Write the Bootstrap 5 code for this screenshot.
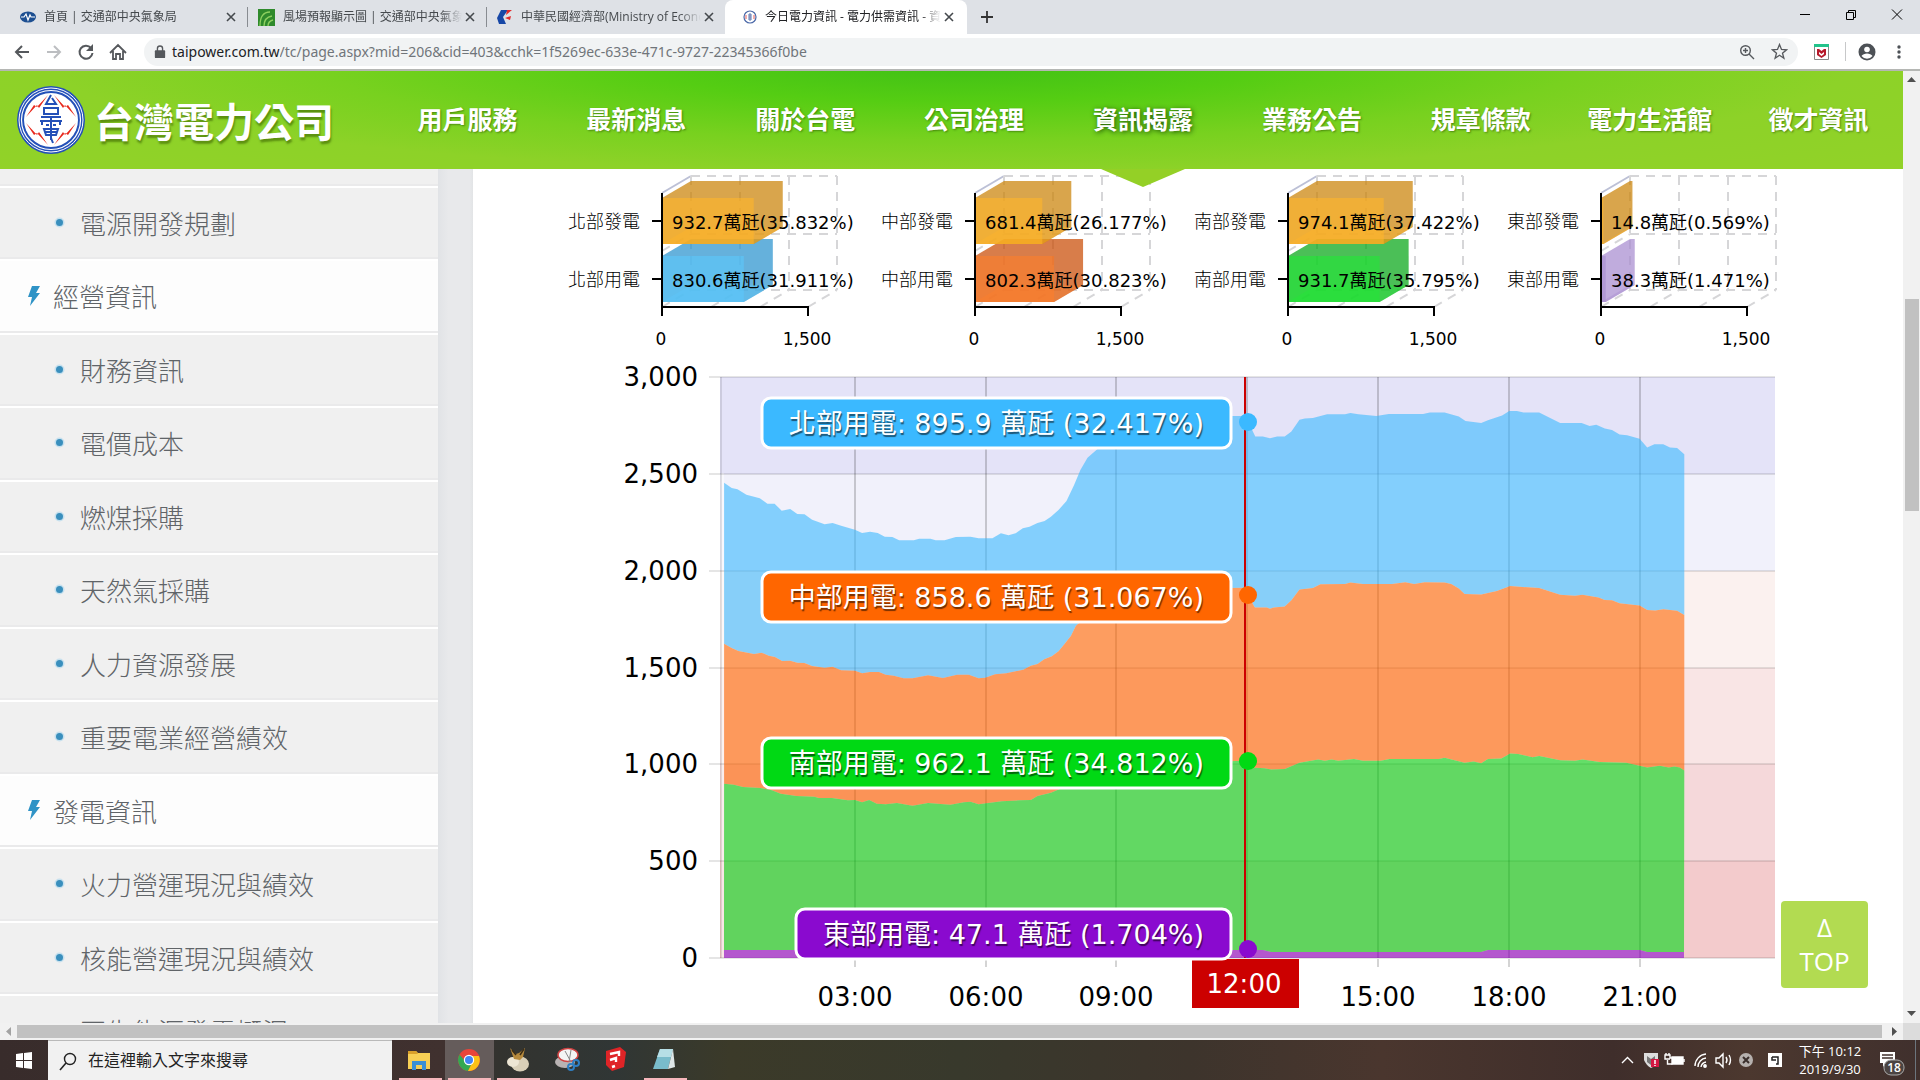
<!DOCTYPE html>
<html lang="zh-Hant">
<head>
<meta charset="utf-8">
<meta name="viewport" content="width=device-width, initial-scale=1">
<title>今日電力資訊 - 電力供需資訊 - 資訊揭露</title>
<link href="https://cdn.jsdelivr.net/npm/bootstrap@5.3.0/dist/css/bootstrap.min.css" rel="stylesheet">
<style>
  body { font-family: "Open Sans", "Noto Sans CJK TC", sans-serif; background: #fff; }
  button { border: 0; background: none; padding: 0; }
  svg { display: block; flex: none; }

  .tab-strip { height: 34px; background: #dee1e6; font-size: 12px; color: #3c4043; }
  .tab-item { width: 238px; height: 34px; padding: 0 8px 0 10px; }
  .tab-item a { color: #45494d; text-decoration: none; flex: 1 1 0; overflow: hidden; white-space: nowrap; line-height: 20px;
    -webkit-mask-image: linear-gradient(90deg, #000 88%, transparent); mask-image: linear-gradient(90deg, #000 88%, transparent); }
  .tab-item svg { margin-right: 8px; }
  .tab-item button svg { margin: 0; }
  .tab-item button { width: 16px; height: 16px; }
  .tab-line { border-right: 1px solid #888c91; height: 20px; }
  .tab-first { width: 247px; padding-left: 20px; }
  .tab-open { width: 242px; background: #fff; border-radius: 8px 8px 0 0; padding: 0 10px 0 18px; }
  .tab-open a { color: #202124; }
  .win-btn { width: 46px; height: 28px; }

  .tool-row { height: 37px; border-bottom: 2px solid #b5b7b4; padding: 0 14px 0 12px; }
  .tool-btn { width: 20px; height: 20px; }
  .tool-set { column-gap: 12px; }
  .omni { height: 28px; border-radius: 14px; background: #f1f3f4; padding: 0 10px; font-family: "Noto Sans", sans-serif; font-size: 14px; line-height: 20px; }
  .omni input { border: 0; outline: 0; background: transparent; color: #70757a; }
  .omni label { color: #202124; padding-left: 6px; }

  .site-head { height: 98px; z-index: 5;
    background: radial-gradient(ellipse 900px 110px at 50% -8px, #3fc016 0, #55cd13 35%, #78d11f 70%, #8dd228 100%, #95d228 170%); }
  .brand-link { width: 383px; }
  .brand-name { font-family: "Noto Sans CJK TC", sans-serif; font-size: 40px; line-height: 56px; font-weight: 700; color: #fff; text-shadow: 1px 3px 2px rgba(60,100,0,.6); }
  .site-nav a { font-family: "Noto Sans CJK TC", sans-serif; flex: 1 1 0; text-align: center; font-size: 25px; line-height: 36px; font-weight: 700; color: #fff; text-decoration: none; white-space: nowrap; text-shadow: 1px 1px 2px rgba(40,90,0,.6); padding: 29px 0 33px; position: relative; }
  .site-nav a.here { text-shadow: 1px 1px 5px rgba(20,70,0,.9); }
  .site-nav a.here::after { content: ""; position: absolute; left: 50%; top: 100%; margin-left: -42px; border: 42px solid transparent; border-top: 18px solid #94d026; border-bottom: 0; }

  .side-menu { width: 438px; background: #f0f0f0; font-family: "Noto Sans CJK TC", sans-serif; }
  .side-menu a { display: flex; align-items: center; flex: none; height: 74px; border-bottom: 2px solid #fff; box-shadow: inset 0 -2px 0 #eaeaeb; padding: 0 0 3px 53px; font-size: 26px; font-weight: 300; color: #606468; text-decoration: none; }
  .side-menu a:nth-child(even) { height: 73px; }
  .side-menu a:first-child { height: 19px; }
  .side-menu a svg { margin-right: 14px; }
  .side-menu a.group { background: #fdfdfd; padding-left: 27px; }
  .side-menu a.group svg { margin-right: 12px; }
  .side-gap { width: 35px; background: linear-gradient(90deg, #e1e3e6, #e8e9eb 30%, #e8e9eb 90%, #e2e4e6); }

  .charts { padding: 0 93px 0 85px; }
  .charts svg { width: 100%; height: auto; }
  .charts text { font-family: "DejaVu Sans", "Noto Sans CJK TC", sans-serif; }
  .charts .t-name { font-size: 18px; font-weight: 300; }
  .charts .t-name text { font-family: "Noto Sans CJK TC", sans-serif; }
  .t-val { font-size: 18px; }
  .t-axis { font-size: 26px; }
  .t-tip { font-size: 27px; fill: #fff; text-shadow: 1px 2px 1px rgba(0,0,0,.55); }
  .t-scale { font-size: 17px; }

  .to-top { position: fixed; right: 52px; bottom: 92px; width: 87px; height: 87px; padding-bottom: 2px; border-radius: 4px; background: #b2db51; color: #fff; font-size: 26px; line-height: 34px; }

  .v-bar { width: 17px; background: #f1f1f1; }
  .v-bar .thumb { background: #c1c1c1; height: 212px; margin: 211px 1px 0 2px; }
  .h-bar { height: 17px; background: #f1f1f1; }
  .h-bar .thumb { background: #c1c1c1; height: 13px; }
  .h-bar .corner { width: 17px; height: 17px; background: #dcdcdc; }

  .task { height: 40px; color: #fff; background: linear-gradient(90deg, #382c2b 0, #40312f 23%, #33332f 26%, #303635 32%, #3b3a29 38%, #38392c 50%, #3d342c 62%, #4a362e 72%, #3f2e2b 84%, #4c382f 91%, #40302d 100%); }
  .start-btn { width: 48px; height: 40px; }
  .find { width: 344px; background: #f1f1f1; border-top: 1px solid #b9b9b9; color: #222; }
  .find input { border: 0; outline: 0; background: transparent; font-size: 16px; width: 240px; padding: 0 0 2px; }
  .find input::placeholder { color: #222; opacity: 1; }
  .app { width: 49px; height: 40px; border-bottom: 2px solid transparent; }
  .app.on { border-image: linear-gradient(90deg, transparent 4px, #f6b6bb 4px, #f6b6bb 45px, transparent 45px) 1; border-bottom: 2px solid; border-top: 0; border-left: 0; border-right: 0; }
  .app.front { background: #655c5b; }
  .clock { font-size: 13px; line-height: 18px; width: 66px; text-align: center; white-space: nowrap; margin: 0 16px 0 12px; }
</style>
<script src="https://cdn.jsdelivr.net/npm/bootstrap@5.3.0/dist/js/bootstrap.bundle.min.js"></script>
</head>
<body class="vh-100 d-flex flex-column overflow-hidden">

<!-- browser tabs -->
<div class="tab-strip d-flex align-items-center flex-shrink-0">
  <div class="tab-item tab-first d-flex align-items-center">
    <svg width="16" height="16" viewBox="0 0 16 16"><ellipse cx="8" cy="8" rx="8" ry="5.500" fill="#1d4f91"/><path d="M1 8h3l2-3 2 6 2-5 1 2h4" fill="none" stroke="#fff" stroke-width="1.200"/></svg>
    <a href="#">首頁 | 交通部中央氣象局</a>
    <button aria-label="關閉分頁"><svg width="16" height="16" viewBox="0 0 16 16"><path d="M4 4l8 8M12 4l-8 8" stroke="#45494d" stroke-width="1.600"/></svg></button>
  </div><div class="tab-line"></div>
  <div class="tab-item d-flex align-items-center">
    <svg width="17" height="17" viewBox="0 0 17 17"><path fill="#2f8a2c" d="M0 0h17v17H0z"/><path d="M2 17C2 8 5 3 12 3M6 17c0-6 2-9 8-10M10 17c0-3 1-5 5-6" stroke="#8ed060" stroke-width="1.300" fill="none"/></svg>
    <a href="#">風場預報顯示圖 | 交通部中央氣象局</a>
    <button aria-label="關閉分頁"><svg width="16" height="16" viewBox="0 0 16 16"><path d="M4 4l8 8M12 4l-8 8" stroke="#45494d" stroke-width="1.600"/></svg></button>
  </div><div class="tab-line"></div>
  <div class="tab-item d-flex align-items-center">
    <svg width="16" height="16" viewBox="0 0 16 16"><path fill="#1747a6" d="M4 1h7L6 8l3 7H2L0 9z"/><path fill="#e22a2a" d="M10 1l5 0-6 5zM8 9l6-2-1 4z"/></svg>
    <a href="#">中華民國經濟部(Ministry of Economic Affairs)</a>
    <button aria-label="關閉分頁"><svg width="16" height="16" viewBox="0 0 16 16"><path d="M4 4l8 8M12 4l-8 8" stroke="#45494d" stroke-width="1.600"/></svg></button>
  </div>
  <div class="tab-item tab-open d-flex align-items-center">
    <svg width="14" height="14" viewBox="0 0 14 14"><circle cx="7" cy="7" r="6" fill="#fff" stroke="#4a68a8" stroke-width="1.200"/><path d="M7 3v8M5 5h4M5 7h4M5 9h4" stroke="#4a68a8" stroke-width=".9"/><path d="M3 5v4M11 5v4" stroke="#e45b5b"/></svg>
    <a href="#">今日電力資訊 - 電力供需資訊 - 資訊揭露</a>
    <button aria-label="關閉分頁"><svg width="16" height="16" viewBox="0 0 16 16"><path d="M4 4l8 8M12 4l-8 8" stroke="#45494d" stroke-width="1.600"/></svg></button>
  </div>
  <button class="ms-2" aria-label="新分頁"><svg width="24" height="18" viewBox="0 0 24 18"><path d="M12 3v12M6 9h12" stroke="#333" stroke-width="1.800"/></svg></button>
  <div class="ms-auto d-flex align-self-start">
    <button class="win-btn" aria-label="最小化"><svg width="46" height="28"><path d="M18 14.500h10" stroke="#000"/></svg></button>
    <button class="win-btn" aria-label="還原"><svg width="46" height="28"><path d="M18.500 12.500h7v7h-7zM20.500 12.500v-2h7v7h-2" fill="none" stroke="#000"/></svg></button>
    <button class="win-btn" aria-label="關閉"><svg width="46" height="28"><path d="M18 9.500l10 10M28 9.500l-10 10" stroke="#000"/></svg></button>
  </div>
</div>

<!-- address bar -->
<div class="tool-row d-flex align-items-center flex-shrink-0">
  <div class="tool-set d-flex me-3">
    <button class="tool-btn" aria-label="上一頁"><svg width="20" height="20" viewBox="0 0 20 20"><path d="M17 10H4M10 4l-6 6 6 6" fill="none" stroke="#55585c" stroke-width="2"/></svg></button>
    <button class="tool-btn" aria-label="下一頁"><svg width="20" height="20" viewBox="0 0 20 20"><path d="M3 10h13M10 4l6 6-6 6" fill="none" stroke="#bcbec1" stroke-width="2"/></svg></button>
    <button class="tool-btn" aria-label="重新載入"><svg width="20" height="20" viewBox="0 0 20 20"><path d="M15 6a6.500 6.500 0 1 0 1.500 5" fill="none" stroke="#55585c" stroke-width="2"/><path d="M17 2v7h-7z" fill="#55585c"/></svg></button>
    <button class="tool-btn" aria-label="首頁"><svg width="20" height="20" viewBox="0 0 20 20"><path d="M2 11l8-8 8 8M5 9v8h3v-5h4v5h3V9" fill="none" stroke="#55585c" stroke-width="1.800"/></svg></button>
  </div>
  <div class="omni d-flex align-items-center flex-grow-1">
    <svg width="12" height="14" viewBox="0 0 14 16"><rect x="1" y="6" width="12" height="9" rx="1" fill="#55585c"/><path d="M4 7V4a3 3 0 0 1 6 0v3" fill="none" stroke="#55585c" stroke-width="1.600"/></svg>
    <label for="url">taipower.com.tw</label><input id="url" class="flex-grow-1 p-0" value="/tc/page.aspx?mid=206&amp;cid=403&amp;cchk=1f5269ec-633e-471c-9727-22345366f0be">
    <button class="me-3" aria-label="縮放"><svg width="16" height="16" viewBox="0 0 16 16"><circle cx="6.500" cy="6.500" r="4.800" fill="none" stroke="#55585c" stroke-width="1.400"/><path d="M10 10l5 5M6.500 4v5M4 6.500h5" stroke="#55585c" stroke-width="1.400"/></svg></button>
    <button aria-label="加入書籤"><svg width="17" height="17" viewBox="0 0 17 17"><path d="M8.500 1.500l2 5 5 .3-4 3.400 1.400 5-4.400-2.900-4.400 2.900 1.400-5-4-3.400 5-.3z" fill="none" stroke="#55585c" stroke-width="1.300"/></svg></button>
  </div>
  <svg class="ms-3" width="15" height="16" viewBox="0 0 15 16"><path fill="#fff" stroke="#888" d="M.5.5h14v15H.5z"/><path fill="#23c38b" d="M0 0h15v3H0z"/><path fill="#b61a2c" d="M3 5h2l2.500 2L10 5h2v6l-4.500 3L3 11z"/><path fill="#fff" d="M5 8l2.500 2L10 8v2l-2.500 2L5 10z"/></svg>
  <div class="vr ms-3 me-2 my-2"></div>
  <button class="ms-1" aria-label="帳戶"><svg width="18" height="18" viewBox="0 0 18 18"><circle cx="9" cy="9" r="8.500" fill="#4d5156"/><circle cx="9" cy="6.500" r="2.800" fill="#fff"/><path d="M3.500 13c2-3.500 9-3.500 11 0a7 7 0 0 1-11 0z" fill="#fff"/></svg></button>
  <button class="ms-3" aria-label="選單"><svg width="14" height="18" viewBox="0 0 14 18"><g fill="#4d5156"><circle cx="7" cy="4" r="1.700"/><circle cx="7" cy="9" r="1.700"/><circle cx="7" cy="14" r="1.700"/></g></svg></button>
</div>

<!-- page -->
<div class="d-flex flex-grow-1 overflow-hidden">
  <div class="d-flex flex-column flex-grow-1 overflow-hidden">
    <header class="site-head d-flex align-items-center flex-shrink-0 position-relative">
      <a href="#" class="brand-link d-flex align-items-center text-decoration-none flex-shrink-0">
        <svg class="ms-3 me-2" width="70" height="70" viewBox="-35 -35 70 70">
          <circle r="34" fill="#2450b8"/><circle r="32" fill="none" stroke="#fff" stroke-width="1"/><circle r="29.500" fill="none" stroke="#fff" stroke-width="1.200"/><circle r="27" fill="#fff"/>
          <g fill="#e8281c"><path d="M-3-25l-9 13-2-3-11 12 8-12 3 2z"/><path d="M3-25l9 13 2-3 11 12-8-12-3 2z"/><path d="M-3 25l-9-13-2 3-11-12 8 12 3-2z"/><path d="M3 25l9-13 2 3 11-12-8 12-3-2z"/></g>
          <g fill="none" stroke="#2450b8" stroke-width="2"><path d="M0-25l-5 9H5L1-22M-7-12H7v6H-7zM-10-3h20M-11 1h22M0-3v23M-9 1v4M9 1v4M-5 5h3M2 5h3M-7 9H7l-2 6H-5zM-6 12H6M0 18l2 5"/></g>
        </svg>
        <span class="brand-name">台灣電力公司</span>
      </a>
      <nav class="site-nav d-flex flex-grow-1">
        <a href="#">用戶服務</a><a href="#">最新消息</a><a href="#">關於台電</a><a href="#">公司治理</a><a href="#" class="here">資訊揭露</a><a href="#">業務公告</a><a href="#">規章條款</a><a href="#">電力生活館</a><a href="#">徵才資訊</a>
      </nav>
    </header>
    <div class="d-flex flex-grow-1 overflow-hidden">
      <nav class="side-menu d-flex flex-column flex-shrink-0 overflow-hidden" id="menu"></nav>
      <div class="side-gap flex-shrink-0"></div>
      <main class="charts flex-grow-1 overflow-hidden">
        <div class="row row-cols-4 g-0" id="minis"></div>
        <svg id="load" viewBox="558 360 1252 663" role="img" aria-label="各區用電曲線"></svg>
      </main>
    </div>
  </div>
  <div class="v-bar flex-shrink-0 d-flex flex-column">
    <svg width="17" height="17"><path d="M4 11h9l-4.500-5z" fill="#505050"/></svg>
    <div class="thumb"></div>
    <svg class="mt-auto" width="17" height="17"><path d="M4 5h9l-4.500 5z" fill="#505050"/></svg>
  </div>
</div>
<button class="to-top" type="button">Δ<br>TOP</button>
<div class="h-bar d-flex align-items-center flex-shrink-0">
  <svg width="17" height="17"><path d="M11 4v9l-5-4.500z" fill="#a3a3a3"/></svg>
  <div class="thumb flex-grow-1"></div>
  <svg class="ms-1" width="17" height="17"><path d="M6 4v9l5-4.500z" fill="#505050"/></svg>
  <div class="corner"></div>
</div>

<!-- task bar -->
<div class="task d-flex flex-shrink-0">
  <button class="start-btn" aria-label="開始"><svg width="48" height="40"><path d="M16 14l7-1v7h-7zM24 13l8-1v8h-8zM16 21h7v7l-7-1zM24 21h8v8l-8-1z" fill="#fff"/></svg></button>
  <div class="find d-flex align-items-center">
    <svg width="40" height="38"><circle cx="22" cy="17" r="5.500" fill="none" stroke="#222" stroke-width="1.400"/><path d="M18 21l-6 7" stroke="#222" stroke-width="1.600"/></svg>
    <input aria-label="搜尋" placeholder="在這裡輸入文字來搜尋">
  </div>
  <div class="d-flex ms-1">
    <button class="app on" aria-label="檔案總管"><svg width="46" height="38"><path d="M12 11h8l2 2h12v16H12z" fill="#f7cf55"/><path d="M12 11h8l2 3H12z" fill="#d9a02b"/><path d="M16 21h14v9h-4v-5h-6v5h-4z" fill="#3a8fd6"/></svg></button>
    <button class="app on front" aria-label="Chrome"><svg width="48" height="38"><circle cx="24" cy="20" r="11" fill="#e8443a"/><path d="M14.500 14.500A11 11 0 0 0 23 31l5-9-8-1z" fill="#33a852"/><path d="M34 16A11 11 0 0 1 23 31l5-10-3-5z" fill="#fbc116"/><circle cx="24" cy="20" r="5.200" fill="#fff"/><circle cx="24" cy="20" r="4" fill="#4285f4"/></svg></button>
    <button class="app on" aria-label="遊戲"><svg width="48" height="38"><ellipse cx="26" cy="24" rx="9" ry="7.500" fill="#d9cfb8"/><ellipse cx="19" cy="22" rx="6" ry="5" fill="#eee6d4"/><path d="M16 8l6 6 3-1 6-5-2 9-3 3-6-1z" fill="#b78a3d"/><path d="M18 10l4 5M30 9l-4 6" stroke="#3b2c16" stroke-width="1.500"/></svg></button>
    <button class="app" aria-label="剪取工具"><svg width="48" height="38"><ellipse cx="22" cy="22" rx="10" ry="6" fill="#b9b3b3"/><ellipse cx="25" cy="15" rx="10" ry="6.500" fill="#f4f4f4" stroke="#d04343" stroke-width="1.500"/><path d="M22 11l6 11M28 10l-2 12" stroke="#888"/><circle cx="28" cy="27" r="3" fill="none" stroke="#2f7fc4" stroke-width="2"/><circle cx="33" cy="23" r="3" fill="none" stroke="#2f7fc4" stroke-width="2"/></svg></button>
    <button class="app" aria-label="SketchUp"><svg width="48" height="38"><path d="M14 11l14-4 6 5-2 15-12 4-6-6z" fill="#df2427"/><path d="M18 14l9-2v4M18 20l6-2v4M20 27l3-1" fill="none" stroke="#fff" stroke-width="2.400"/></svg></button>
    <button class="app on" aria-label="記事本"><svg width="48" height="38"><path d="M19 9h13l-5 20H12z" fill="#79bccb"/><path d="M19 9h13l-2 8H16z" fill="#b6dfe6"/><path d="M32 9l2 18-7 2z" fill="#dfe7e8"/></svg></button>
  </div>
  <div class="d-flex align-items-center ms-auto">
    <svg width="170" height="40" viewBox="0 0 170 40">
      <g fill="none" stroke="#fff" stroke-width="1.400">
        <path d="M7 23l5.500-5.500L18 23"/>
        <path d="M57 17h11v7H57z" fill="#fff"/><path d="M69 19v3M57 18h-2v-3h-5v4h5M51 13v2M54 13v2M52.500 20v4h5"/>
        <path d="M80 26a12 12 0 0 1 11-12M83 27a9 9 0 0 1 8-9M86 27a6 6 0 0 1 5-5"/><circle cx="90" cy="26" r="1.200" fill="#fff"/>
        <path d="M101 18h3l4-4v13l-4-4h-3zM111 17q2 3 0 6M114 15q3 5 0 10"/>
      </g>
      <path d="M29 13h14v7q-2 6-7 8-5-3-7-8z" fill="#ddd"/><path d="M32 16l4 3 4-3v6l-4 3-4-3z" fill="#777"/><path d="M36 19h8v8h-8z" fill="#d31742"/><path d="M40 20v4M40 25v1" stroke="#fff" stroke-width="1.500"/>
      <circle cx="131" cy="20" r="7" fill="#b6b1ae"/><path d="M128 17l6 6M134 17l-6 6" stroke="#3a2f2c" stroke-width="2"/>
      <path d="M153 13h14v14h-14z" fill="#fff"/><path d="M157 17h6v7h-2M157 17v3h4" fill="none" stroke="#222" stroke-width="1.500"/>
    </svg>
    <div class="clock">下午 10:12<br>2019/9/30</div>
    <svg width="36" height="40"><path d="M1 12h15v11H7l-3 4v-4H1z" fill="#fff"/><path d="M3 15h11M3 18h11" stroke="#40302d" stroke-width="1.300"/><rect x="5" y="20" width="20" height="15" rx="7" fill="#4b4442" stroke="#aaa"/><text x="15" y="32" font-size="12" font-weight="600" fill="#fff" text-anchor="middle">18</text></svg>
    <div class="border-start border-secondary h-100 me-1"></div>
  </div>
</div>

<script>
const boltIcon = '<svg width="14" height="22" viewBox="0 0 14 22"><path d="M5 1h8l-4 7h4L3 21l2-9H1z" fill="#2f93c6"/></svg>';
const dotIcon = '<svg width="13" height="13" viewBox="0 0 13 13"><circle cx="6.500" cy="6.500" r="5" fill="#c6e0ee"/><circle cx="6.500" cy="6.500" r="3.500" fill="#3a8fbd"/></svg>';
const menu = ['', '電源開發規劃', '*經營資訊', '財務資訊', '電價成本', '燃煤採購', '天然氣採購', '人力資源發展', '重要電業經營績效', '*發電資訊', '火力營運現況與績效', '核能營運現況與績效', '再生能源發電概況'];
document.getElementById('menu').innerHTML = menu.map(m =>
  m === '' ? '<a href="#" aria-label="上一項"></a>' :
  m[0] === '*' ? `<a href="#" class="group">${boltIcon}${m.slice(1)}</a>` : `<a href="#">${dotIcon}${m}</a>`).join('');

// regional bars: generation above, consumption below
const regions = [
  ['北部', 932.7, '35.832', 830.6, '31.911', '#5cc8fb', '#2a93cf'],
  ['中部', 681.4, '26.177', 802.3, '30.823', '#fd7f2c', '#c94b04'],
  ['南部', 974.1, '37.422', 931.7, '35.795', '#22e836', '#06a616'],
  ['東部', 14.8, '0.569', 38.3, '1.471', '#a78cd0', '#a78cd0']];
const bar = (y, v, front, dark) => {
  const w = v * .0973 + 1, x = 662, r = x + w;
  return `<path d="M${x} ${y}l29-17h${w}v46l-29 17h${-w}z" fill="${dark}" opacity=".72"/>
    <path d="M${x} ${y + 46}l29-17h${w}l-29 17z" fill="${front}" opacity=".4"/>
    <path d="M${x} ${y}h${w}v46h${-w}z" fill="${front}" opacity=".6"/>`;
};
document.getElementById('minis').innerHTML = regions.map(([n, g, gp, u, up, f, d]) => `<div class="col"><svg viewBox="558 169 313 191">
  <path d="M662 193l29-17" stroke="#bcc0d6" stroke-width="2" fill="none"/>
  <g fill="none" stroke="#d6d6d8" stroke-width="2" stroke-dasharray="9 7">
    <path d="M691 176h146M691 234h146M691 290h146M691 176v114M740 176v114M789 176v114M837 176v114M662 251l29-17M662 307l29-17M711 307l29-17M760 307l29-17M808 307l29-17"/></g>
  ${bar(256, u, f, d)}${bar(198, g, '#ffb52a', '#cb8207')}
  <path d="M662 193v123M661 307h147v9M652 221h10M652 279h10" fill="none" stroke="#000" stroke-width="2"/>
  <g class="t-name" text-anchor="end"><text x="640" y="228">${n}發電</text><text x="640" y="286">${n}用電</text></g>
  <g class="t-val"><text x="672" y="229">${g}萬瓩(${gp}%)</text><text x="672" y="287">${u}萬瓩(${up}%)</text></g>
  <g class="t-scale" text-anchor="middle"><text x="661" y="345">0</text><text x="807" y="345">1,500</text></g></svg></div>`).join('');

const early = a => a.map(([x, y]) => [600 + x / 2.24, 360 + y / 3]);
const late = a => a.map(([x, y]) => [1220 + x / 2.24, 360 + y / 2.376]);
const north = early([[278,368],[295,384],[308,388],[328,404],[358,415],[375,431],[391,431],[407,452],[426,447],[442,462],[458,463],[475,479],[503,493],[521,489],[540,497],[571,509],[587,519],[605,515],[622,519],[638,530],[655,531],[670,541],[703,541],[715,536],[740,536],[752,541],[772,541],[797,531],[830,530],[848,535],[879,535],[898,520],[915,526],[931,520],[947,505],[962,500],[980,489],[996,483],[1010,470],[1027,450],[1045,423],[1062,375],[1076,330],[1092,293],[1115,266],[1160,220],[1260,168],[1440,168],[1452,185],[1468,230]])
  .concat(late([[79,182],[96,182],[112,186],[128,182],[145,182],[160,170],[178,142],[190,139],[208,138],[240,129],[280,129],[292,126],[310,129],[350,133],[378,128],[455,128],[470,125],[503,125],[535,134],[550,145],[585,150],[600,143],[632,132],[648,121],[665,121],[680,125],[715,125],[762,150],[810,150],[828,157],[843,154],[862,163],[878,166],[895,177],[912,179],[940,187],[957,208],[973,200],[993,200],[1008,208],[1024,209],[1040,224]]));
const middle = early([[278,851],[295,864],[310,873],[345,882],[362,878],[378,887],[392,891],[408,903],[426,902],[442,908],[458,909],[475,918],[503,923],[521,920],[540,931],[571,932],[587,940],[605,936],[625,936],[640,944],[658,947],[680,955],[700,955],[735,946],[768,954],[800,944],[826,944],[848,955],[863,953],[885,943],[910,940],[948,929],[965,917],[980,912],[995,898],[1012,889],[1027,874],[1040,853],[1055,827],[1066,797],[1075,787],[1100,740],[1180,690],[1440,683],[1452,706],[1466,741]])
  .concat(late([[79,588],[105,588],[112,591],[120,588],[145,586],[160,571],[178,545],[208,542],[225,533],[280,532],[292,529],[320,532],[385,532],[415,528],[435,532],[458,528],[503,529],[518,532],[535,543],[548,556],[585,557],[620,549],[650,537],[715,542],[762,558],[795,560],[812,558],[848,564],[862,570],[878,571],[895,578],[940,583],[957,594],[975,595],[993,592],[1024,596],[1040,606]]));
const south = early([[278,1271],[300,1274],[320,1281],[360,1284],[385,1291],[405,1301],[440,1308],[480,1310],[490,1314],[520,1314],[555,1321],[571,1320],[587,1327],[603,1320],[620,1331],[640,1333],[665,1329],[700,1337],[735,1329],[785,1334],[815,1327],[830,1325],[848,1333],[900,1324],[940,1321],[965,1320],[980,1308],[1010,1298],[1030,1287],[1060,1270],[1180,1215],[1440,1202],[1452,1207],[1466,1224]])
  .concat(late([[79,969],[100,970],[115,973],[145,972],[178,957],[220,949],[235,952],[250,949],[265,952],[300,948],[320,952],[360,952],[380,948],[490,948],[503,945],[530,952],[548,957],[568,954],[585,958],[600,948],[630,947],[650,935],[668,936],[700,944],[715,941],[762,951],[795,952],[812,949],[850,955],[910,957],[957,968],[985,964],[1005,968],[1018,966],[1030,968],[1040,975]]));
const east = [[724,950],[1263,950],[1271,952],[1481,952],[1488,950],[1640,950],[1647,952],[1684,952]];
const floor = [[724,958],[1684,958]];
const area = (top, base, c) => `<path fill="${c}" fill-opacity=".6" d="M${top.concat([...base].reverse()).map(p => p[0].toFixed(1) + ' ' + p[1].toFixed(1)).join('L')}z"/>`;
const yAt = v => Math.round(958 - v * 581 / 3000), xAt = h => Math.round(724 + h * 43.6);
const hours = [3, 6, 9, 12, 15, 18, 21];
let s = '';
['#f3cbcc', '#f5d8da', '#f9e5e5', '#fbf1ef', '#f1f1fb', '#e4e3f8'].forEach((c, i) => {
  s += `<path fill="${c}" d="M720 ${yAt(i * 500 + 500)}h1055V${yAt(i * 500)}H720z"/>`; });
s += '<path fill="#fff" fill-opacity=".5" d="M721 473h3v485h-3z"/><path d="M721 377v581" stroke="#000" stroke-opacity=".1" stroke-width="2"/>';
for (let v = 0; v <= 3000; v += 500) s += `<path d="M709 ${yAt(v)}H1775" stroke="#000" stroke-opacity=".1" stroke-width="2"/><text class="t-axis" x="698" y="${yAt(v) + 9}" text-anchor="end">${v.toLocaleString('en-US')}</text>`;
hours.forEach(h => {
  s += `<path d="M${xAt(h)} 377v581" stroke="#000" stroke-opacity=".18" stroke-width="2"/><path d="M${xAt(h)} 959v8" stroke="#d4d4d4" stroke-width="2"/>`;
  if (h !== 12) s += `<text class="t-axis" x="${xAt(h)}" y="1006" text-anchor="middle">${String(h).padStart(2, '0')}:00</text>`; });
s += area(north, middle, '#3bb9ff') + area(middle, south, '#ff6600') + area(south, east, '#00d914') + area(east, floor, '#8a0acf');
s += '<path d="M1245 377v581" stroke="#c00" stroke-width="2"/><path d="M1192 959h107v49h-107z" fill="#c00"/><text class="t-axis" x="1244" y="993" text-anchor="middle" fill="#fff">12:00</text>';
[['北部用電: 895.9 萬瓩 (32.417%)', '#3bb9ff', 762, 398, 422], ['中部用電: 858.6 萬瓩 (31.067%)', '#ff6600', 762, 572, 595],
 ['南部用電: 962.1 萬瓩 (34.812%)', '#00d914', 762, 738, 761], ['東部用電: 47.1 萬瓩 (1.704%)', '#8a0acf', 796, 909, 949]].forEach(([t, c, x, y, cy]) => {
  s += `<circle cx="1248" cy="${cy}" r="9" fill="${c}"/><rect x="${x}" y="${y}" width="${1231 - x}" height="50" rx="9" fill="${c}" stroke="#fff" stroke-width="3"/><text class="t-tip" x="1204" y="${y + 35}" text-anchor="end">${t}</text>`; });
document.getElementById('load').innerHTML = s;
</script>
</body>
</html>
